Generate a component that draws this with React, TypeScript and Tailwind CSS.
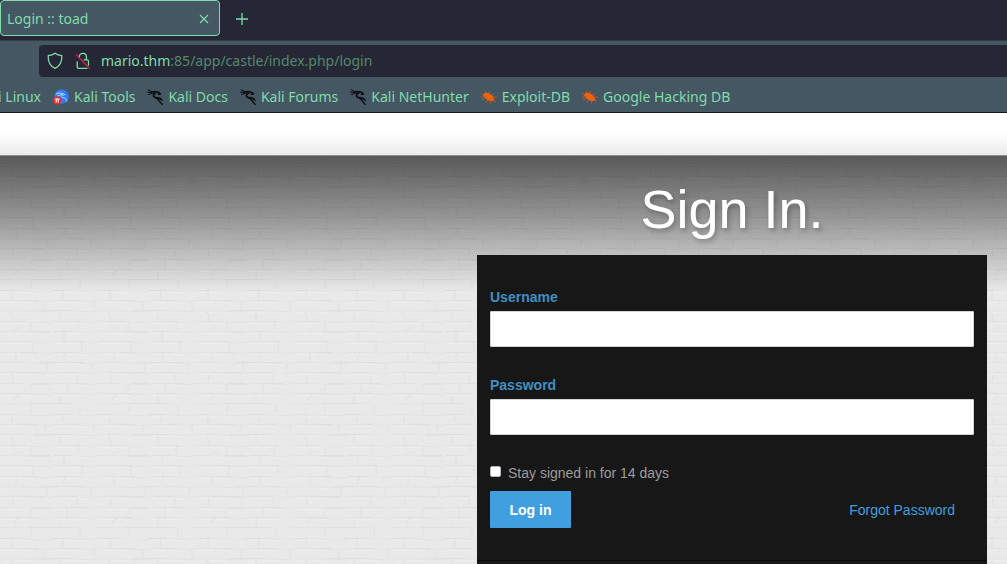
import { useId } from 'react';

function ShieldIcon() {
  return (
    <svg viewBox="0 0 16 18" className="h-[18px] w-4 shrink-0" fill="none" stroke="#7fdcab" strokeWidth="1.3" strokeLinejoin="round" aria-hidden="true">
      <path d="M8 1.2C9.8 2.6 12 3.4 14.8 3.6C15.1 9.5 13 14 8 16.4C3 14 .9 9.5 1.2 3.6C4 3.4 6.2 2.6 8 1.2Z" />
    </svg>
  );
}

function InsecureLockIcon() {
  return (
    <svg viewBox="0 0 16 18" className="h-[18px] w-4 shrink-0" fill="none" strokeLinecap="round" strokeLinejoin="round" aria-hidden="true">
      <path d="M4.2 5.2C4.2 2.8 5.8 1.4 7.8 1.4S11.4 2.8 11.4 5.2V7.8M2.2 9.8V15Q2.2 16.3 3.5 16.3H12M13.5 13V9.2Q13.5 7.8 12.2 7.8H9" stroke="#7fdcab" strokeWidth="1.3" />
      <path d="M1.4 3L14.4 16.3" stroke="#e0194b" strokeWidth="1.3" />
    </svg>
  );
}

function DragonIcon() {
  return (
    <svg viewBox="0 0 16 16" className="size-4 shrink-0" fill="none" stroke="#080b0e" strokeLinecap="round" strokeLinejoin="round" aria-hidden="true">
      <path d="M1.2 .8L4.4 2.4L7.4 3M.6 3.2L4 3.4L6.6 4.4M1.6 5.4L4.6 4.6" strokeWidth="1" />
      <path d="M4.6 3L7.6 2.6L11.4 3.2L13.6 5L11.4 5.2" strokeWidth="1.5" />
      <path d="M8.6 4.2C6.2 4.8 5.6 7.2 7.6 8.3C9.6 9.3 12 8.6 14 10" strokeWidth="1.7" />
      <path d="M9.6 9.4C11.4 10.2 11.8 11.6 13 13L15.2 15.4M14 10L15 11.4" strokeWidth="1.4" />
    </svg>
  );
}

function ToolsIcon() {
  return (
    <svg viewBox="0 0 16 16" className="size-4 shrink-0" aria-hidden="true">
      <circle cx="8.6" cy="7.6" r="7.2" fill="#2f7df4" />
      <path d="M3 5C6 3.4 9 3.6 12 5.8M4.4 7C6.4 5.4 8.8 5.4 10.4 6.2M8.6 5.8C7.4 8.3 9.4 8.6 11.6 9C13 9.4 13.4 10.8 13.8 12.2" fill="none" stroke="#cfe2ff" strokeWidth=".9" strokeLinecap="round" />
      <circle cx="4.2" cy="11.6" r="4.1" fill="#ea2c2c" />
      <path d="M1.8 10H6.6M3.2 10V13.6M5.2 10V13.6" fill="none" stroke="#fff" strokeWidth="1.1" />
    </svg>
  );
}

function BugIcon() {
  return (
    <svg viewBox="0 0 16 16" className="size-4 shrink-0" aria-hidden="true">
      <path d="M3 6L.8 4.8M5 5L4.2 2.2M7.8 4.8L8.6 2.6M10.5 6.3L12.8 4.8M12 8L15.4 8.2M13 10.5L14.2 13M9.5 12L9.7 14.2M6.8 11.3L4.6 13.2M4 9.5L1.4 11M2.8 8L.4 8.1" stroke="#b5602f" strokeWidth="1" strokeLinecap="round" />
      <path d="M1.8 5.8L4.2 3.8L7.4 4L10.2 5.8L12.3 8.2L13.4 11.2L10.2 12.2L6.6 11L3.9 8.8Z" fill="#f2610d" />
    </svg>
  );
}

const bookmarks = [
  { label: 'Kali Tools', Icon: ToolsIcon },
  { label: 'Kali Docs', Icon: DragonIcon },
  { label: 'Kali Forums', Icon: DragonIcon },
  { label: 'Kali NetHunter', Icon: DragonIcon },
  { label: 'Exploit-DB', Icon: BugIcon },
  { label: 'Google Hacking DB', Icon: BugIcon },
];

const brickJoints = [
  'M31 0q2 4-1 9M80 1v8', 'M12 11v8M62 11q2 4 0 8', 'M46 21l-2 8M94 21v8', 'M10 32q4 3 2 9M60 31v9',
  'M31 42v8M79 43q-2 3 0 7', 'M13 52q3-5 9-4M64 52v9', 'M34 63q-2 3-1 8M82 62v9', 'M16 73v8M66 73q-3 3-2 8',
  'M47 83v9M92 84l-2 7', 'M12 94q2 4 0 8M77 94v8', 'M31 104q1 4-2 8M67 104v8', 'M14 120q2-6 10-7M60 115v8',
];

function BrickWall() {
  const id = useId();
  return (
    <svg className="absolute inset-0 h-full w-full" aria-hidden="true">
      <defs>
        <pattern id={id} width="98" height="124" patternUnits="userSpaceOnUse">
          {brickJoints.map((joint, i) => {
            const y = i * 10 + 10 + Math.floor(i / 3);
            return (
              <g key={joint} fill="none">
                <path d={`M0 ${y}.5h22l8 1h20l7-1h18l6 1h10l7-1`} stroke="#e4e4e4" strokeWidth="1.2" />
                <path d={`M${(i * 17) % 40} ${y}.5h${14 + ((i * 7) % 20)}M${50 + ((i * 11) % 20)} ${y}.5h18`} stroke="#dfdfdf" strokeWidth="1" />
                <path d={`M2 ${y + 2}.5h31M52 ${y + 2}.5h36`} stroke="#ededed" strokeWidth="1" />
                <path d={joint} stroke="#e3e3e3" strokeWidth="1.4" />
              </g>
            );
          })}
        </pattern>
      </defs>
      <rect width="100%" height="100%" fill={`url(#${id})`} />
    </svg>
  );
}

function Browser() {
  return (
    <header className="overflow-hidden border-b border-[#171925] bg-[#455763] font-['Noto_Sans',sans-serif] text-sm text-[#7fdcab]">
      <div className="flex h-[41px] items-start border-b border-[#323d48] bg-[#252834]">
        <div className="flex h-9 w-[220px] items-center justify-between rounded-sm border border-[#7fdcab] bg-[#455763] pt-px pr-[9px] pl-1.5">
          <span>Login :: toad</span>
          <button type="button" aria-label="Close tab" className="flex size-3 items-center justify-center">
            <svg viewBox="0 0 10 10" className="size-2.5" stroke="currentColor" strokeWidth="1.1" aria-hidden="true">
              <path d="M1 1L9 9M9 1L1 9" />
            </svg>
          </button>
        </div>
        <button type="button" aria-label="New tab" className="ml-4 flex h-[37px] w-3 items-center justify-center">
          <svg viewBox="0 0 12 12" className="size-3 shrink-0" stroke="currentColor" strokeWidth="1.3" aria-hidden="true">
            <path d="M6 0V12M0 6H12" />
          </svg>
        </button>
      </div>
      <div className="pt-1 pl-[39px]">
        <div className="flex h-8 items-center rounded-l bg-[#252834] pl-2">
          <ShieldIcon />
          <span className="ml-3 flex"><InsecureLockIcon /></span>
          <span className="ml-2.5 whitespace-nowrap text-[#54876f]">
            <span className="text-[#7fdcab]">mario.thm</span>:85/app/castle/index.php/login
          </span>
        </div>
      </div>
      <nav aria-label="Bookmarks" className="flex h-[35px] items-center gap-3 pt-1 whitespace-nowrap">
        <span className="flex w-[41px] shrink-0 justify-end overflow-hidden"><a href="#kali">Kali Linux</a></span>
        {bookmarks.map(({ label, Icon }) => (
          <a key={label} href="#bookmark" className="flex items-center gap-[5px]">
            <Icon />
            {label}
          </a>
        ))}
      </nav>
    </header>
  );
}

function Field({ id, label, type }: { id: string; label: string; type: string }) {
  return (
    <div>
      <label htmlFor={id} className="block font-bold text-[#3f8fc2]">{label}</label>
      <input id={id} type={type} className="mt-1 block h-9 w-full rounded-[1px] border border-[#d4d4d4] bg-white px-2 text-[#333]" />
    </div>
  );
}

export default function App() {
  return (
    <div className="flex min-h-screen flex-col">
      <Browser />
      <div className="h-[43px] border-b border-[#8a8c8b] bg-linear-to-b from-white from-50% to-[#ebebeb]" />
      <main className="relative flex grow justify-end bg-[#e9e9e9] pr-5 font-['Liberation_Sans',sans-serif] text-sm leading-5">
        <BrickWall />
        <div className="absolute inset-x-0 top-0 h-[136px] bg-linear-to-b from-black/62 via-black/36 via-45% to-transparent" />
        <div className="relative flex w-[510px] flex-col">
          <h1 className="pt-[23px] pb-4 text-center text-[54px] leading-[60px] text-white [text-shadow:2px_3px_5px_rgba(0,0,0,0.25)]">Sign In.</h1>
          <form className="border-b border-[#0a0a0a] bg-[#171717] px-[13px] pt-8 pb-8" onSubmit={(e) => e.preventDefault()}>
            <div className="flex flex-col gap-7">
              <Field id="username" label="Username" type="text" />
              <Field id="password" label="Password" type="password" />
            </div>
            <div className="mt-7 flex items-center gap-[7px] text-[#9c9c9c]">
              <input id="stay" type="checkbox" className="mb-1 size-[11px] appearance-none rounded-[2px] border border-[#b5b5bd] bg-white checked:bg-[#409fde]" />
              <label htmlFor="stay">Stay signed in for 14 days</label>
            </div>
            <div className="mt-2 flex items-center justify-between pr-[19px]">
              <button type="submit" className="h-[37px] w-[81px] rounded-[1px] bg-[#409fde] font-bold text-white">Log in</button>
              <a href="#forgot" className="text-[#409fde]">Forgot Password</a>
            </div>
          </form>
          <div className="grow bg-[#171717]" />
        </div>
      </main>
    </div>
  );
}
